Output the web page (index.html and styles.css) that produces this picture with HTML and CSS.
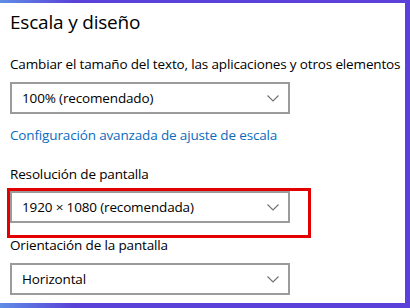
FILE: index.html
```html
<!DOCTYPE html>
<html lang="es">
  <head>
    <meta charset="UTF-8" />
    <title>Escala y diseño</title>
    <link rel="stylesheet" href="styles.css">
  </head>
  <body>
    <div class="panel">
      <h1>Escala y diseño</h1>

      <p class="label first">Cambiar el tamaño del texto, las aplicaciones y otros elementos</p>
      <div class="select">
        <span>100% (recomendado)</span>
        <svg class="chevron" width="12" height="7" viewBox="0 0 12 7">
          <path d="M0.5 0.5 L6 6 L11.5 0.5" fill="none" stroke="#707070" stroke-width="1.1" />
        </svg>
      </div>

      <a class="link" href="#">Configuración avanzada de ajuste de escala</a>

      <p class="label">Resolución de pantalla</p>
      <div class="highlight">
        <div class="select">
          <span>1920 × 1080 (recomendada)</span>
          <svg class="chevron" width="12" height="7" viewBox="0 0 12 7">
            <path d="M0.5 0.5 L6 6 L11.5 0.5" fill="none" stroke="#707070" stroke-width="1.1" />
          </svg>
        </div>
        <div class="red-box"></div>
      </div>

      <p class="label orient">Orientación de la pantalla</p>
      <div class="select">
        <span>Horizontal</span>
        <svg class="chevron" width="12" height="7" viewBox="0 0 12 7">
          <path d="M0.5 0.5 L6 6 L11.5 0.5" fill="none" stroke="#707070" stroke-width="1.1" />
        </svg>
      </div>
    </div>
  </body>
</html>
```

FILE: styles.css
```css
html,
body {
  margin: 0;
  padding: 0;
}

body {
  width: 410px;
  height: 308px;
  overflow: hidden;
  background: linear-gradient(to right, #5f8de6, #5a42d8 18%, #5b40d9 100%);
  font-family: "Open Sans", "Noto Sans", sans-serif;
  color: #000;
}

.panel {
  box-sizing: border-box;
  width: 405px;
  height: 300px;
  margin-top: 3px;
  background: #fff;
  padding: 0 0 0 10px;
  display: flex;
  flex-direction: column;
  align-items: flex-start;
}

h1 {
  font-size: 19px;
  font-weight: 400;
  line-height: 26px;
  margin: 6px 0 0 0;
  letter-spacing: -0.2px;
}

.label {
  font-size: 13.5px;
  line-height: 20px;
  margin: 0;
  letter-spacing: -0.15px;
}

.label.first {
  margin-top: 19px;
}

.select {
  box-sizing: border-box;
  width: 280px;
  height: 32px;
  border: 2px solid #9b9b9b;
  display: flex;
  align-items: center;
  justify-content: space-between;
  padding: 0 9px 0 10px;
  font-size: 13.5px;
  letter-spacing: -0.15px;
  margin-top: 8px;
}

.chevron {
  display: block;
}

.link {
  color: #0a6cbd;
  text-decoration: none;
  font-size: 13.5px;
  line-height: 20px;
  letter-spacing: -0.15px;
  margin: 11px 0 0 0;
}

.link + .label {
  margin-top: 19px;
}

.highlight {
  position: relative;
  margin-top: 7px;
}

.highlight .select {
  margin-top: 0;
}

.red-box {
  position: absolute;
  left: -3px;
  top: -3px;
  width: 304px;
  height: 50px;
  box-sizing: border-box;
  border: 3px solid #e20000;
}

.label.orient {
  margin-top: 12px;
}
```
